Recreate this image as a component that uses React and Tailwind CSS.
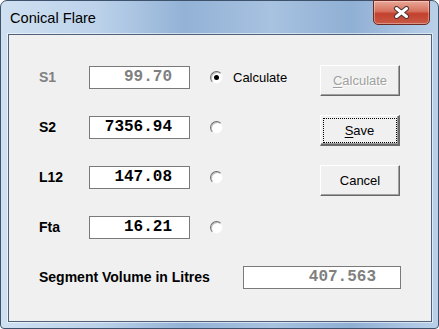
import React from "react";

const sans = { fontFamily: '"Liberation Sans", Arial, sans-serif' };
const mono = { fontFamily: '"Liberation Mono", "Courier New", monospace' };

function Radio({ checked }) {
  return (
    <div className="mt-[6px] w-[13px] h-[13px] rounded-full border border-t-[#6e6e6e] border-l-[#6e6e6e] border-b-[#f4f4f4] border-r-[#f4f4f4] bg-white shadow-[inset_1px_1px_0_#bdbdbd] flex items-center justify-center">
      {checked && <div className="w-[5px] h-[5px] rounded-full bg-black" />}
    </div>
  );
}

function NumBox({ value, grey, width = "w-[101px]", pad = "pr-[17px]" }) {
  return (
    <div
      className={`mt-[1px] h-[23px] ${width} bg-white border border-[#7a7a7a] flex justify-end items-start pt-[2px] ${pad} text-[16px] leading-none font-bold ${grey ? "text-[#808080]" : "text-black"}`}
      style={mono}
    >
      {value}
    </div>
  );
}

function Btn({ children, disabled, isDefault }) {
  return (
    <div
      className={`h-[31px] w-[80px] bg-[#f0f0f0] border-t border-l border-t-white border-l-white border-b-[#696969] border-r-[#696969] shadow-[inset_-1px_-1px_0_#a0a0a0] flex items-center justify-center text-[13px] leading-none ${
        isDefault ? "border-b-2 border-r-2 outline-1 outline-dotted outline-black outline-offset-[-4px]" : "border-b border-r"
      } ${disabled ? "text-[#a0a0a0] [text-shadow:1px_1px_0_#fff]" : "text-black"}`}
      style={sans}
    >
      {children}
    </div>
  );
}

export default function App() {
  const rows = [
    { label: "S1", value: "99.70", grey: true, checked: true, text: "Calculate" },
    { label: "S2", value: "7356.94" },
    { label: "L12", value: "147.08" },
    { label: "Fta", value: "16.21" },
  ];

  const buttons = [
    <Btn key="c" disabled>
      <u className="underline-offset-2">C</u>alculate
    </Btn>,
    <Btn key="s" isDefault>
      <u className="underline-offset-2">S</u>ave
    </Btn>,
    <Btn key="x">Cancel</Btn>,
  ];

  return (
    <div
      className="w-[439px] h-[329px] rounded-t-[7px] rounded-b-[4px] border border-[#3f526b] flex flex-col bg-[linear-gradient(90deg,#cfe0f1_0%,#bcd2ea_22%,#93b2d6_42%,#a8c2e0_62%,#8fafd4_80%,#bad0e9_100%)]"
      style={sans}
    >
      {/* TITLE BAR */}
      <div className="h-[33px] flex items-start justify-between pl-[9px] pr-[8px]">
        <div className="mt-[10px] text-[14.6px] leading-none text-black">Conical Flare</div>
        <div className="-mt-px w-[57px] h-[25px] rounded-b-[5px] border border-[#6e2a22] bg-[linear-gradient(180deg,#e9a898_0%,#d6705d_45%,#c2412d_55%,#c95a46_100%)] shadow-[inset_0_0_0_1px_rgba(255,255,255,0.35)] flex items-center justify-center">
          <svg width="17" height="13" viewBox="0 0 17 13">
            <path d="M3.5 2.5 L13.5 10.5 M13.5 2.5 L3.5 10.5" stroke="#4a3434" strokeWidth="5" strokeLinecap="round" />
            <path d="M3.5 2.5 L13.5 10.5 M13.5 2.5 L3.5 10.5" stroke="#ffffff" strokeWidth="3" strokeLinecap="round" />
          </svg>
        </div>
      </div>

      {/* CLIENT */}
      <div className="ml-[7px] mr-[6px] mb-[6px] flex-1 bg-[#f0f0f0] border border-[#4f6279] shadow-[0_0_0_1px_rgba(255,255,255,0.55)] pt-[30px] pl-[30px] flex flex-col gap-[19px]">
        {rows.map((r, i) => (
          <div key={r.label} className="h-[31px] grid grid-cols-[50px_101px_20px_13px_97px_80px] items-start">
            <div className={`mt-[5px] text-[14px] leading-none font-bold ${r.grey ? "text-[#808080]" : "text-black"}`}>
              {r.label}
            </div>
            <NumBox value={r.value} grey={r.grey} />
            <div />
            <Radio checked={r.checked} />
            <div className="mt-[6px] pl-[10px] text-[13px] leading-none text-black">{r.text}</div>
            <div>{buttons[i]}</div>
          </div>
        ))}

        <div className="h-[31px] flex items-start">
          <div className="w-[204px] mt-[5px] text-[14px] leading-none font-bold text-black">
            Segment Volume in Litres
          </div>
          <NumBox value="407.563" grey width="w-[158px]" pad="pr-[24px]" />
        </div>
      </div>
    </div>
  );
}
